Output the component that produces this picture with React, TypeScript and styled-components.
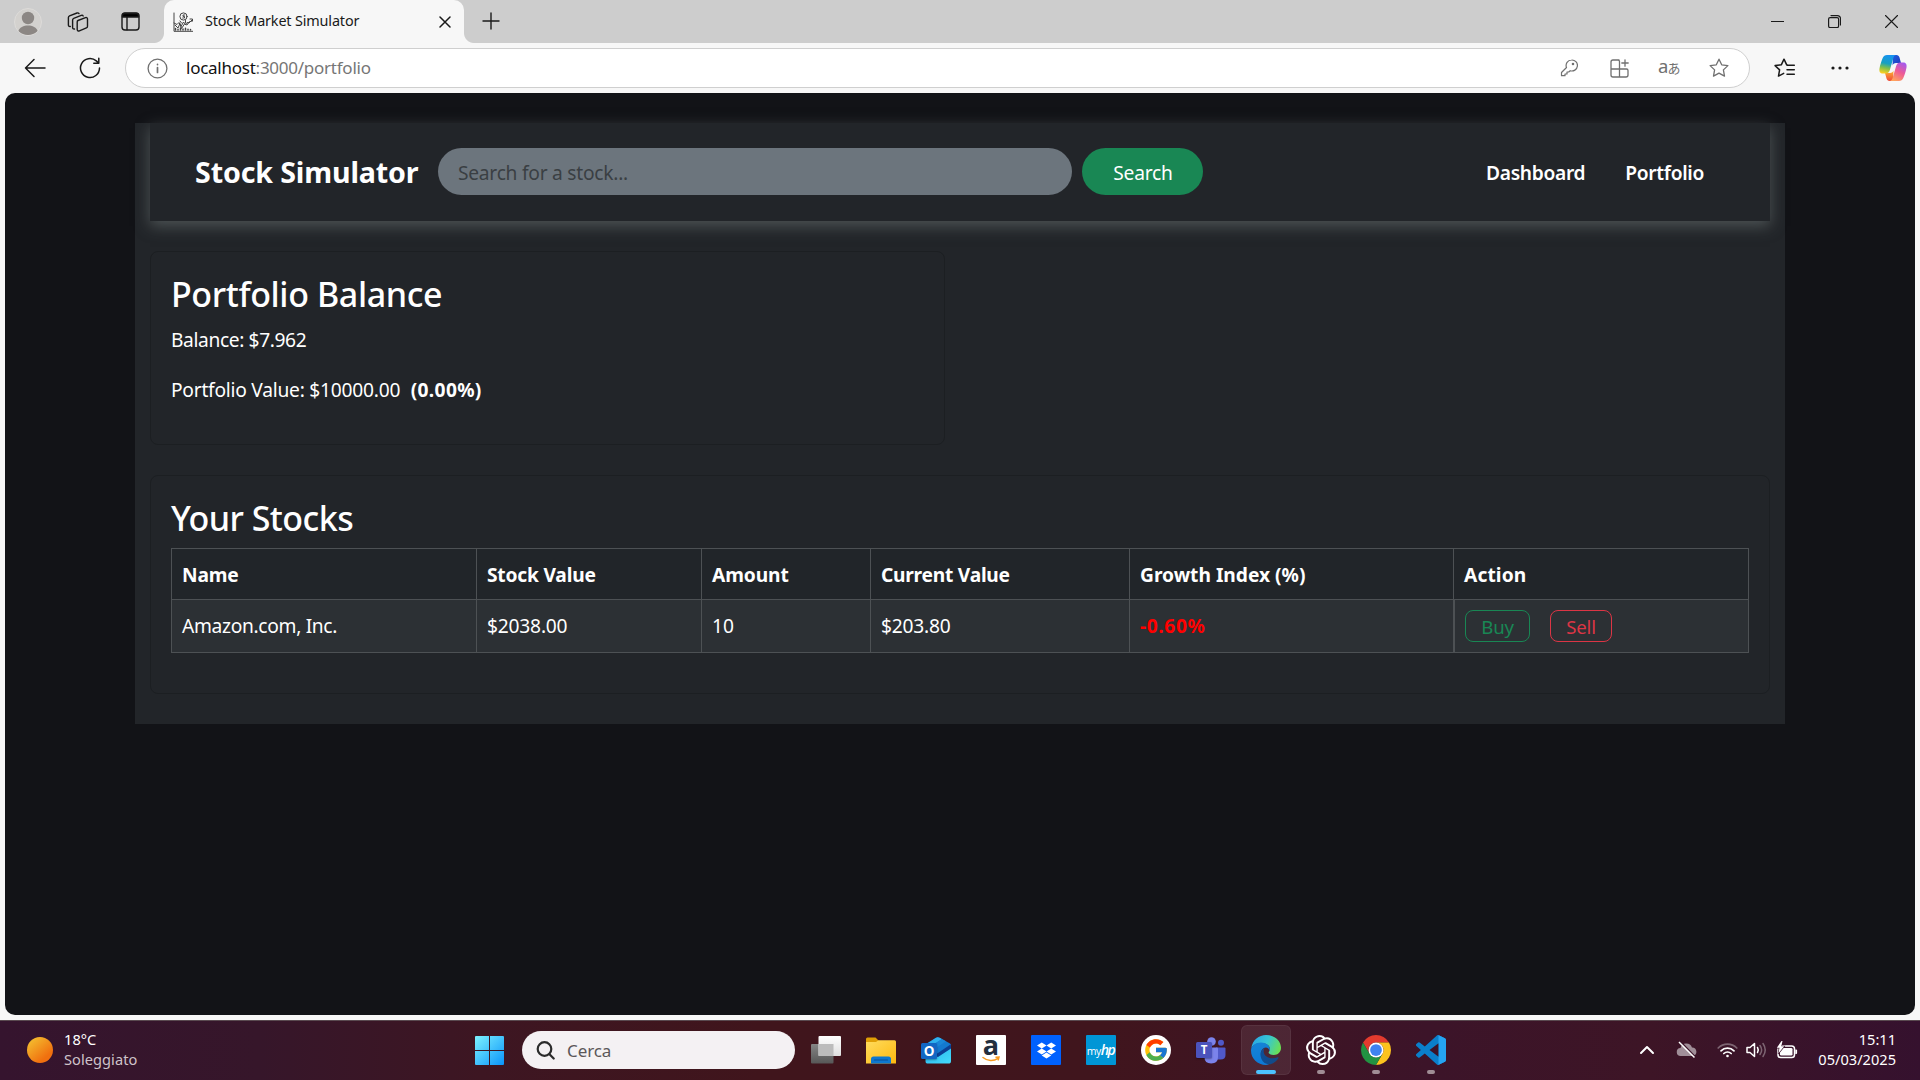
import React from "react";
import styled, { createGlobalStyle } from "styled-components";
import { FcGoogle } from "react-icons/fc";
import { FaDropbox } from "react-icons/fa";
import { SiOpenai } from "react-icons/si";

const font = `"Noto Sans", "Open Sans", sans-serif`;

const GlobalStyle = createGlobalStyle`
  *, *::before, *::after { box-sizing: border-box; }
  body { margin: 0; background: #f7f7f7; font-family: ${font}; overflow: hidden; }
  button, input { font-family: inherit; }
  svg { display: block; flex: none; }
`;

const Screen = styled.div`
  width: 1920px;
  height: 1080px;
  display: flex;
  flex-direction: column;
`;

/* ---------- browser chrome ---------- */

const TabStrip = styled.header`
  height: 43px;
  flex: none;
  display: flex;
  align-items: center;
  background: #cdcdcd;
  padding-left: 14px;
`;

const StripIcon = styled.span<{ $gap?: number; $up?: number }>`
  display: flex;
  margin-left: ${(p) => p.$gap ?? 0}px;
  margin-bottom: ${(p) => p.$up ?? 0}px;
`;

const Tab = styled.div`
  position: relative;
  align-self: stretch;
  width: 300px;
  margin-left: 24px;
  padding: 0 13.5px 0 9px;
  display: flex;
  align-items: center;
  background: #f7f7f7;
  border-radius: 10px 10px 0 0;

  &::before,
  &::after {
    content: "";
    position: absolute;
    bottom: 0;
    width: 10px;
    height: 10px;
  }
  &::before {
    left: -10px;
    background: radial-gradient(circle at 0 0, transparent 9.5px, #f7f7f7 10.5px);
  }
  &::after {
    right: -10px;
    background: radial-gradient(circle at 100% 0, transparent 9.5px, #f7f7f7 10.5px);
  }
`;

const TabTitle = styled.span`
  flex: 1;
  margin: 0 0 3px 12px;
  font-size: 14.4px;
  letter-spacing: -0.15px;
  color: #1a1a1a;
`;

const WindowButtons = styled.div`
  margin-left: auto;
  display: flex;
  align-items: center;
  gap: 44px;
  padding-right: 22px;
`;

const Toolbar = styled.div`
  height: 50px;
  flex: none;
  display: flex;
  align-items: center;
  padding-left: 24px;
  background: #f7f7f7;
`;

const AddressBar = styled.div`
  width: 1625px;
  height: 40px;
  margin-left: 24px;
  padding: 0 5px 0 21px;
  display: flex;
  align-items: center;
  background: #fff;
  border: 1px solid #cfcfcf;
  border-radius: 20px;
`;

const Url = styled.span`
  flex: 1;
  margin-left: 18px;
  padding-bottom: 1px;
  font-size: 17px;
  letter-spacing: -0.25px;
  color: #767676;

  b {
    font-weight: 400;
    color: #111;
  }
`;

const AddressIcons = styled.div`
  display: grid;
  grid-template-columns: repeat(4, 50px);
  align-items: center;
  justify-items: center;
`;

const Translate = styled.span`
  width: 22px;
  display: flex;
  align-items: baseline;
  color: #707070;
  font: 18.5px/20px "Noto Sans", sans-serif;
  padding-bottom: 2px;

  small {
    font: 13px/20px "Noto Sans CJK JP", sans-serif;
    margin-left: -1px;
  }
`;

const ToolbarIcons = styled.div`
  display: flex;
  align-items: center;
  margin-left: 24px;
`;

/* ---------- page ---------- */

const Viewport = styled.main`
  height: 922px;
  flex: none;
  margin: 0 5px;
  padding-top: 30px;
  background: #121317;
  border-radius: 10px;
  color: #fff;
  font-size: 19.2px;
`;

const Container = styled.div`
  width: 1650px;
  height: 601px;
  margin: 0 auto;
  padding: 0 15px;
  background: #222529;
`;

const Nav = styled.nav`
  height: 98px;
  padding: 0 66px 2px 45px;
  display: flex;
  align-items: center;
  background: #222529;
  box-shadow: 0 5px 14px rgba(108, 117, 117, 0.58);
`;

const Brand = styled.span`
  width: 243px;
  font-size: 28.6px;
  font-weight: 700;
  letter-spacing: -0.13px;
`;

const SearchInput = styled.input`
  width: 634px;
  height: 47px;
  padding: 2px 20px 0;
  border: 0;
  border-radius: 24px;
  background: #6c757d;
  color: #fff;
  font-size: 19.2px;
  letter-spacing: -0.25px;

  &::placeholder {
    color: #3a3f43;
    opacity: 1;
  }
`;

const SearchButton = styled.button`
  width: 121px;
  height: 47px;
  margin-left: 10px;
  padding: 2px 0 0 1px;
  border: 0;
  border-radius: 24px;
  background: #198754;
  color: #fff;
  font-size: 19.2px;
  letter-spacing: -0.2px;
`;

const NavLinks = styled.div`
  margin-left: auto;
  display: flex;
  gap: 40px;
  padding-top: 3px;
  font-weight: 600;
  letter-spacing: -0.3px;
`;

const Card = styled.section<{ $w: number; $h: number }>`
  width: ${(p) => p.$w}px;
  height: ${(p) => p.$h}px;
  margin-top: 30px;
  padding: 21px 20px 20px;
  border: 1px solid #1c1f22;
  border-radius: 8px;
`;

const Heading = styled.h3<{ $ls: number; $mb: number }>`
  margin: 0 0 ${(p) => p.$mb}px;
  font-size: 34px;
  font-weight: 500;
  line-height: 43px;
  letter-spacing: ${(p) => p.$ls}px;
`;

const Line = styled.p<{ $ls: number }>`
  margin: 0 0 20px;
  line-height: 30px;
  letter-spacing: ${(p) => p.$ls}px;

  strong {
    margin-left: 10.5px;
    letter-spacing: 0.35px;
  }
`;

const Table = styled.div`
  display: grid;
  grid-template-columns: 305px 225px 169px 259px 324px 296px;
  grid-template-rows: 51px 53px;
  border-bottom: 1px solid #4d5154;
`;

const Cell = styled.div<{ $head?: boolean; $ls?: number; $thick?: boolean; $color?: string }>`
  display: flex;
  align-items: center;
  padding: 0 0 ${(p) => (p.$head ? 0 : 1)}px 10px;
  border-left: ${(p) => (p.$thick ? 2 : 1)}px solid #4d5154;
  border-top: 1px solid #4d5154;
  background: ${(p) => (p.$head ? "#212529" : "#2c3034")};
  font-weight: ${(p) => (p.$head || p.$color ? 700 : 400)};
  color: ${(p) => p.$color ?? "#fff"};
  letter-spacing: ${(p) => p.$ls ?? 0}px;

  &:nth-child(6n) {
    border-right: 1px solid #4d5154;
  }
`;

const OutlineButton = styled.button<{ $color: string; $w: number }>`
  width: ${(p) => p.$w}px;
  height: 32px;
  margin-right: 20px;
  padding: 2px 0 0;
  border: 1px solid ${(p) => p.$color};
  border-radius: 8px;
  background: transparent;
  color: ${(p) => p.$color};
  font-size: 18.6px;
  line-height: 28px;
  letter-spacing: -0.2px;
`;

/* ---------- taskbar ---------- */

const Taskbar = styled.footer`
  height: 60px;
  flex: none;
  margin-top: 5px;
  padding-bottom: 1px;
  display: flex;
  align-items: center;
  border-top: 1px solid #5a4a50;
  background: linear-gradient(90deg, #35142e 0, #36162a 260px, #3d1622 480px, #40151c 760px, #40151d 1100px, #3c1429 1430px, #3d1526 1650px, #35112e 1920px);
  color: #fff;
`;

const Weather = styled.div`
  width: 448px;
  padding-left: 27px;
  display: flex;
  align-items: center;
  gap: 11px;
  font-size: 14.6px;
  line-height: 20px;
  letter-spacing: 0.05px;

  div {
    padding-bottom: 3px;
  }
  small {
    display: block;
    font-size: inherit;
    color: #cfc3ca;
  }
`;

const Sun = styled.span`
  width: 26px;
  height: 26px;
  margin-bottom: 1px;
  border-radius: 50%;
  background: linear-gradient(140deg, #f4bd2f 10%, #f0700f 75%);
`;

const Slot = styled.div<{ $active?: boolean }>`
  position: relative;
  width: 50px;
  height: 50px;
  margin-right: 5px;
  display: flex;
  align-items: center;
  justify-content: center;
  border-radius: 6px;
  ${(p) => p.$active && "background: rgba(255,255,255,0.08); box-shadow: inset 0 0 0 1px rgba(255,255,255,0.06);"}
`;

const Running = styled.span<{ $active?: boolean }>`
  position: absolute;
  left: 50%;
  bottom: 1px;
  width: ${(p) => (p.$active ? 20 : 8)}px;
  height: 4px;
  transform: translateX(-50%);
  border-radius: 2px;
  background: ${(p) => (p.$active ? "#4cc2ff" : "#a08d95")};
`;

const TaskSearch = styled.div`
  width: 273px;
  height: 38px;
  margin: 0 6px 0 3px;
  padding-left: 14px;
  display: flex;
  align-items: center;
  gap: 12px;
  border-radius: 19px;
  background: #f4f1f3;
  color: #5b5759;
  font-size: 17px;
  letter-spacing: -0.1px;
`;

const AppTile = styled.span<{ $bg: string; $round?: boolean }>`
  width: 30px;
  height: 30px;
  display: flex;
  align-items: center;
  justify-content: center;
  border-radius: ${(p) => (p.$round ? "50%" : "1px")};
  background: ${(p) => p.$bg};
`;

const AmazonMark = styled.span`
  display: flex;
  flex-direction: column;
  align-items: center;
  color: #232f3e;
  font: 700 27px/18px "Open Sans", sans-serif;
  padding-bottom: 2px;

  svg {
    margin-top: 2px;
  }
`;

const MyHp = styled.span`
  display: flex;
  align-items: baseline;
  color: #fff;
  font: 10.5px/14px "Open Sans", sans-serif;
  letter-spacing: -0.5px;

  i {
    font: italic 600 14px/14px "Open Sans", sans-serif;
    letter-spacing: -1.5px;
    padding-right: 1px;
  }
`;

const Tray = styled.div`
  margin-left: auto;
  display: flex;
  align-items: center;
  padding-right: 24px;
`;

const TrayIcon = styled.span<{ $r: number }>`
  display: flex;
  margin-right: ${(p) => p.$r}px;
`;

const Clock = styled.div`
  text-align: right;
  font-size: 14.6px;
  line-height: 20px;
  letter-spacing: 0;
  padding-bottom: 3px;
`;

/* ---------- icons ---------- */

const Stroke = ({ w, h, sw = 1.3, c = "#1a1a1a", children }: { w: number; h: number; sw?: number; c?: string; children: React.ReactNode }) => (
  <svg width={w} height={h} viewBox={`0 0 ${w} ${h}`} fill="none" stroke={c} strokeWidth={sw} strokeLinecap="round" strokeLinejoin="round">
    {children}
  </svg>
);

const Avatar = () => (
  <svg width="28" height="28" viewBox="0 0 28 28">
    <clipPath id="av"><circle cx="14" cy="14" r="13" /></clipPath>
    <circle cx="14" cy="14" r="13.5" fill="#d3d1ce" stroke="#dddbd9" />
    <g fill="#8c8784" clipPath="url(#av)">
      <circle cx="14" cy="10" r="6.2" />
      <path d="M4 24c1-5 6-6.500 10-6.500s9 1.500 10 6.500c-2 2.500-6 4-10 4s-8-1.500-10-4z" />
    </g>
  </svg>
);

const Workspaces = () => (
  <Stroke w={22} h={22} sw={1.4}>
    <path d="M11 9.500l7.500-2.800c1.200-.4 2 .1 2 1.200v7.300c0 .8-.4 1.400-1.100 1.700l-7 2.900c-1.200.5-2.200 0-2.200-1.200v-7.500c0-.8.2-1.300.8-1.600z" />
    <path d="M7.500 18c-1.200.2-1.900-.4-1.900-1.500V9c0-.8.300-1.400 1.100-1.700l7.500-2.900c.9-.3 1.600-.1 2 .6" />
    <path d="M3.300 15.500c-1.200.2-1.900-.4-1.900-1.500V6.600c0-.8.300-1.400 1.100-1.700l7.500-2.900c.9-.3 1.600-.1 2 .6" />
  </Stroke>
);

const TabActions = () => (
  <Stroke w={19} h={19} sw={1.4}>
    <rect x="1" y="1" width="17" height="17" rx="3" />
    <path d="M1.500 5V3.500a2 2 0 0 1 2-2h12a2 2 0 0 1 2 2V5z" fill="#000" />
    <path d="M6 5.500v12.300" />
  </Stroke>
);

const Favicon = () => (
  <Stroke w={20} h={20} sw={1} c="#444">
    <path d="M1 1v18.300h19" />
    <circle cx="10.500" cy="4.500" r="3.600" />
    <path d="M11.500 3h-1.500v1.400h1.500v1.600H9.700M1 11l3 1.500 2-2 2 4 2.500-4.500 2 2.500 1.500-2 2 .5 3.500-3.500M2 13l3 3 2-4.500 1.500 5 3-4.500 2.500 1 2-3 3-1M17 7h2.500v2M7 9l1.500 2M12.500 8.500v2" />
    <path d="M2.500 18v-1.500M5 18v-.8M7.500 18v-2M10 18v-1M12.500 18v-1.800M15 18v-.8M17.500 18v-.4" strokeWidth="1.500" />
  </Stroke>
);

const starPath = "M10 1.200l2.700 5.600 6.200.8-4.500 4.300 1.100 6.200L10 15.100l-5.500 3 1.100-6.200L1.100 7.600l6.200-.8z";

const Copilot = () => (
  <svg width="28" height="26" viewBox="0 0 28 26">
    <defs>
      <linearGradient id="c1" x1="0.500" y1="0" x2="0.300" y2="1">
        <stop offset="0" stopColor="#1792f0" /><stop offset=".45" stopColor="#16a0c0" /><stop offset=".7" stopColor="#7fc04a" /><stop offset="1" stopColor="#ffd020" />
      </linearGradient>
      <linearGradient id="c2" x1="0.800" y1="0" x2="0.300" y2="1">
        <stop offset="0" stopColor="#a259f0" /><stop offset=".5" stopColor="#ee5a96" /><stop offset="1" stopColor="#ffa45c" />
      </linearGradient>
      <linearGradient id="c3" x1="0" y1="0" x2="1" y2="1">
        <stop offset="0" stopColor="#1c5fe0" /><stop offset="1" stopColor="#2238b8" />
      </linearGradient>
      <linearGradient id="c4" x1="0" y1="0" x2="0" y2="1">
        <stop offset="0" stopColor="#ffb52e" /><stop offset="1" stopColor="#ee4a3a" />
      </linearGradient>
    </defs>
    <path d="M14 0h3.500c1.600 0 2.500 1 3 2.500l1.500 5.500h-5c-2 0-3 1-3.500 2.500z" fill="url(#c3)" />
    <path d="M14 26h-3.500c-1.600 0-2.500-1-3-2.500L6 18h5c2 0 3-1 3.500-2.500z" fill="url(#c4)" />
    <path d="M8 0h9c-1.500.3-2.200 1.500-2.800 3.400L11 14.500C10.300 17 9 18.500 6.500 18.500H4C1 18.500 0 16.500.5 13.500 1.200 9.500 2.500 6 3.700 3 4.500 1 6 0 8 0z" fill="url(#c1)" />
    <path d="M20 26h-9c1.500-.3 2.200-1.500 2.800-3.400L17 11.500C17.700 9 19 7.500 21.500 7.500H24c3 0 4 2 3.500 5-.7 4-2 7.500-3.200 10.500-.8 2-2.300 3-4.300 3z" fill="url(#c2)" />
  </svg>
);

const WindowsLogo = () => (
  <svg width="29" height="29" viewBox="0 0 29 29">
    <linearGradient id="win" x1="0" y1="0" x2="1" y2="1"><stop offset="0" stopColor="#7df2ff" /><stop offset="1" stopColor="#0a94fa" /></linearGradient>
    <path d="M0 1q0-1 1-1h13v14H0zM15 0h13q1 0 1 1v13H15zM0 15h14v14H1q-1 0-1-1zM15 15h14v13q0 1-1 1H15z" fill="url(#win)" />
  </svg>
);

const TaskView = () => (
  <svg width="30" height="28" viewBox="0 0 30 28">
    <defs>
      <linearGradient id="tv1" x1="0" y1="0" x2="0" y2="1"><stop offset="0" stopColor="#858585" /><stop offset="1" stopColor="#575757" /></linearGradient>
      <linearGradient id="tv2" x1="0" y1="0" x2="0" y2="1"><stop offset="0" stopColor="#fff" /><stop offset="1" stopColor="#dedede" /></linearGradient>
    </defs>
    <rect x="0" y="8" width="22.500" height="19.500" rx="1" fill="url(#tv1)" />
    <rect x="7.500" y="0" width="22.500" height="20" rx="1" fill="url(#tv2)" />
    <rect x="7.500" y="8" width="15" height="12" fill="#bcbcbc" />
  </svg>
);

const Explorer = () => (
  <svg width="30" height="27" viewBox="0 0 30 27">
    <linearGradient id="ex" x1="0" y1="0" x2="1" y2="1"><stop offset="0" stopColor="#ffdc5e" /><stop offset="1" stopColor="#fdb90f" /></linearGradient>
    <path d="M0 2Q0 .5 1.500.5h8l3 3V6H0z" fill="#e09f05" />
    <path d="M0 5h10l2.500-1.800H28.500Q30 3.200 30 4.700V26.500H0z" fill="url(#ex)" />
    <path d="M5 26.500v-4.500q0-2.500 2.500-2.500h15q2.500 0 2.500 2.500v4.500z" fill="#0d78d0" />
    <path d="M8.500 23h13" stroke="#0a4f96" strokeWidth="1.200" strokeLinecap="round" />
  </svg>
);

const LetterTile = styled.span<{ $bg: string; $top: number; $size: number }>`
  position: absolute;
  left: 0;
  top: ${(p) => p.$top}px;
  width: 16px;
  height: 16px;
  display: flex;
  align-items: center;
  justify-content: center;
  border-radius: 1.5px;
  background: ${(p) => p.$bg};
  box-shadow: 0 1px 2px rgba(0, 0, 0, 0.35);
  color: #fff;
  font: 700 ${(p) => p.$size}px/16px "Open Sans", sans-serif;
`;

const IconBox = styled.span`
  position: relative;
  display: flex;
`;

const Outlook = () => (
  <IconBox>
    <svg width="30" height="27" viewBox="0 0 30 27">
      <linearGradient id="ol" x1="0" y1="0" x2="1" y2="1"><stop offset="0" stopColor="#28b4ec" /><stop offset="1" stopColor="#45dcfb" /></linearGradient>
      <path d="M4 7.500L15 .8q1.800-1 3.600 0L29 6.500q1 .7 1 2V13L12 22 4 16z" fill="#1479d0" />
      <path d="M4 8L15 .8q1.800-1 3.600 0L21 2 6 12z" fill="#2eb2ee" />
      <path d="M21 2l4 2.300L9 15V9.500z" fill="#1a86d8" />
      <path d="M29.500 7.500L14 18v4l16-9V8.500z" fill="#0c3f94" />
      <path d="M30 11.500V24q0 2.600-2.600 2.600H7Q4.500 26.600 4.500 24V16L17 20z" fill="url(#ol)" />
    </svg>
    <LetterTile $bg="#1267c4" $top={6} $size={13.5}>O</LetterTile>
  </IconBox>
);

const Teams = () => (
  <IconBox>
    <svg width="30" height="27" viewBox="0 0 30 27">
      <circle cx="15.500" cy="4.500" r="4.300" fill="#7b83eb" />
      <circle cx="25" cy="5.800" r="3" fill="#5059c9" />
      <path d="M20 10.500h8.500q1 0 1 1V18q0 4.500-5 4.500H20z" fill="#5059c9" />
      <path d="M9 10.500h12q1 0 1 1V20q0 6.500-6.800 6.500T8.500 20z" fill="#7b83eb" />
    </svg>
    <LetterTile $bg="#4b53bc" $top={5} $size={11.5}>T</LetterTile>
  </IconBox>
);

const Edge = () => (
  <svg width="30" height="30" viewBox="0 0 30 30">
    <defs>
      <linearGradient id="e1" x1="0" y1=".3" x2="1" y2=".6"><stop offset="0" stopColor="#2aa5e4" /><stop offset=".5" stopColor="#36c6d4" /><stop offset="1" stopColor="#6be052" /></linearGradient>
      <linearGradient id="e2" x1=".3" y1="0" x2=".5" y2="1"><stop offset="0" stopColor="#1583d6" /><stop offset="1" stopColor="#0d7ad6" /></linearGradient>
      <linearGradient id="e3" x1="0" y1="0" x2="1" y2=".6"><stop offset="0" stopColor="#0b4f9c" /><stop offset="1" stopColor="#134a86" /></linearGradient>
    </defs>
    <path d="M.3 13C1.500 5 8 0 15 0c9 0 15 6 15 12.800 0 4.700-3.300 7.200-7.200 7.200-3.300 0-5.200-1.200-5.200-2.400 0-.9 1.300-1.300 1.300-3.600C18.900 10.500 15 8 10.500 8 6 8 2 10 .3 13z" fill="url(#e1)" />
    <path d="M0 15.500C0 11 4.500 7.500 10 7.500c5 0 8.900 3 8.900 6.800 0 1-.3 1.700-.6 2.200.2-2.500-1.600-4-3.500-4-3 0-5 3-5 6.500 0 5 4 9 9.200 9.300C18 29.200 16.500 30 15 30 6.500 30 0 23.500 0 15.500z" fill="url(#e2)" />
    <path d="M14 12.500C11 14 9.500 17 9.500 19.500 9.500 25.500 14 30 19.500 29.200c3.500-1 6.500-3.500 8-6.200.3-.6-.2-1-.8-.7-5.500 2.500-13.200.5-14-5-.2-2 .3-3.500 1.300-4.800z" fill="url(#e3)" />
  </svg>
);

const Chrome = () => (
  <svg width="30" height="30" viewBox="0 0 48 48">
    <path d="M24 12h20.780A24 24 0 0 0 3.220 12L13.600 30A12 12 0 0 1 24 12z" fill="#e33b2e" />
    <path d="M24 12h20.780A24 24 0 0 1 24 48l10.390-18A12 12 0 0 0 24 12z" fill="#fcc31e" />
    <path d="M3.220 12A24 24 0 0 0 24 48l10.390-18a12 12 0 0 1-20.780 0z" fill="#229342" />
    <circle cx="24" cy="24" r="12" fill="#fff" />
    <circle cx="24" cy="24" r="9.400" fill="#3f82f0" />
  </svg>
);

const vscodePath =
  "M23.150 2.587L18.210.21a1.494 1.494 0 0 0-1.705.29l-9.460 8.630-4.120-3.128a.999.999 0 0 0-1.276.057L.327 7.261A1 1 0 0 0 .326 8.740L3.899 12 .326 15.260a1 1 0 0 0 .001 1.479L1.650 17.940a.999.999 0 0 0 1.276.057l4.120-3.128 9.460 8.630a1.492 1.492 0 0 0 1.704.29l4.942-2.377A1.500 1.500 0 0 0 24 20.060V3.939a1.500 1.500 0 0 0-.850-1.352zm-5.146 14.861L10.826 12l7.178-5.448v10.896z";

const VsCode = () => (
  <svg width="30" height="30" viewBox="0 0 24 24">
    <clipPath id="vs"><path d="M18 0h6v24h-6z" /></clipPath>
    <path d={vscodePath} fill="#0a7fcb" />
    <path d={vscodePath} fill="#25a4f1" clipPath="url(#vs)" />
  </svg>
);

/* ---------- data ---------- */

const headers: [string, number][] = [
  ["Name", -0.15],
  ["Stock Value", -0.2],
  ["Amount", -0.1],
  ["Current Value", -0.25],
  ["Growth Index (%)", 0],
  ["Action", 0.1],
];

const apps: { icon: React.ReactNode; running?: boolean; active?: boolean }[] = [
  { icon: <TaskView /> },
  { icon: <Explorer /> },
  { icon: <Outlook /> },
  {
    icon: (
      <AppTile $bg="#fff">
        <AmazonMark>
          a
          <svg width="18" height="6" viewBox="0 0 18 6" fill="none" stroke="#f79a1f" strokeWidth="1.500" strokeLinecap="round">
            <path d="M1 1.500c4.500 3.800 10.500 4 15 .8M14 1.200l3-.2-.7 2.800" />
          </svg>
        </AmazonMark>
      </AppTile>
    ),
  },
  { icon: <AppTile $bg="#0061fe"><FaDropbox size={19} color="#fff" /></AppTile> },
  { icon: <AppTile $bg="#0096d6"><MyHp>my<i>hp</i></MyHp></AppTile> },
  { icon: <AppTile $bg="#fff" $round><FcGoogle size={26} /></AppTile> },
  { icon: <Teams /> },
  { icon: <Edge />, running: true, active: true },
  { icon: <SiOpenai size={30} color="#fff" />, running: true },
  { icon: <Chrome />, running: true },
  { icon: <VsCode />, running: true },
];

export default function App() {
  return (
    <Screen>
      <GlobalStyle />
      <TabStrip>
        <StripIcon><Avatar /></StripIcon>
        <StripIcon $gap={25}><Workspaces /></StripIcon>
        <StripIcon $gap={32}><TabActions /></StripIcon>
        <Tab>
          <Favicon />
          <TabTitle>Stock Market Simulator</TabTitle>
          <Stroke w={12} h={12} sw={1.5}><path d="M1 1l10 10M11 1L1 11" /></Stroke>
        </Tab>
        <StripIcon $gap={18} $up={2}><Stroke w={18} h={18} sw={1.4}><path d="M9 1v16M1 9h16" /></Stroke></StripIcon>
        <WindowButtons>
          <Stroke w={13} h={13} sw={1}><path d="M0 6.500h13" /></Stroke>
          <Stroke w={13} h={13} sw={1.2}>
            <rect x=".6" y="2.600" width="10" height="10" rx="1.500" />
            <path d="M3 .6h6.500a3 3 0 0 1 3 3V10" />
          </Stroke>
          <Stroke w={13} h={13} sw={1.1}><path d="M.5.5l12 12M12.500.5l-12 12" /></Stroke>
        </WindowButtons>
      </TabStrip>

      <Toolbar>
        <Stroke w={22} h={20} sw={1.5}><path d="M21 10H1.500M10 1.500L1.500 10l8.500 8.500" /></Stroke>
        <StripIcon $gap={33}>
          <Stroke w={22} h={22} sw={1.5}><path d="M20.500 11a9.500 9.500 0 1 1-3.200-7.100l2.200 2M19.800 1.200v5h-5" /></Stroke>
        </StripIcon>
        <AddressBar>
          <Stroke w={21} h={21} sw={1.3} c="#707070">
            <circle cx="10.500" cy="10.500" r="9.400" />
            <path d="M10.500 9.500v5M10.500 6.400v.2" strokeWidth="1.700" />
          </Stroke>
          <Url><b>localhost</b>:3000/portfolio</Url>
          <AddressIcons>
            <Stroke w={18} h={18} sw={1.2} c="#707070">
              <path d="M11.500 1a5.500 5.500 0 1 1-1.300 10.700L8.700 13H7v2H5v1.700H1.500v-3.200l5-5A5.500 5.500 0 0 1 11.500 1z" />
              <circle cx="13" cy="5" r=".7" fill="#707070" />
            </Stroke>
            <Stroke w={19} h={19} sw={1.3} c="#707070">
              <path d="M9 1H3a2 2 0 0 0-2 2v13a2 2 0 0 0 2 2h13a2 2 0 0 0 2-2v-4.500a1.500 1.500 0 0 0-1.500-1.500H1M9.500 18V2.500A1.500 1.500 0 0 0 8 1M15 .8v6.400M11.800 4h6.400" />
            </Stroke>
            <Translate>a<small>あ</small></Translate>
            <Stroke w={20} h={20} sw={1.3} c="#707070"><path d={starPath} /></Stroke>
          </AddressIcons>
        </AddressBar>
        <ToolbarIcons>
          <Stroke w={22} h={20} sw={1.5}>
            <path d="M13.500 7.300l-.800-.5L10 1.200 7.300 6.800l-6.200.8 4.500 4.300-1.100 6.200 5.200-2.800M13.500 7.300h6.800M13 11.800h7.300M13 16.300h7.300" />
          </Stroke>
          <StripIcon $gap={35}>
            <svg width="18" height="4" viewBox="0 0 18 4" fill="#1a1a1a">
              <circle cx="2" cy="2" r="1.600" /><circle cx="9" cy="2" r="1.600" /><circle cx="16" cy="2" r="1.600" />
            </svg>
          </StripIcon>
          <StripIcon $gap={30}><Copilot /></StripIcon>
        </ToolbarIcons>
      </Toolbar>

      <Viewport>
        <Container>
          <Nav>
            <Brand>Stock Simulator</Brand>
            <SearchInput placeholder="Search for a stock..." />
            <SearchButton>Search</SearchButton>
            <NavLinks><span>Dashboard</span><span>Portfolio</span></NavLinks>
          </Nav>

          <Card $w={795} $h={194}>
            <Heading $ls={-0.38} $mb={9}>Portfolio Balance</Heading>
            <Line $ls={-0.38}>Balance: $7.962</Line>
            <Line $ls={-0.24}>Portfolio Value: $10000.00<strong>(0.00%)</strong></Line>
          </Card>

          <Card $w={1620} $h={219}>
            <Heading $ls={-0.55} $mb={8}>Your Stocks</Heading>
            <Table>
              {headers.map(([label, ls]) => (
                <Cell key={label} $head $ls={ls}>{label}</Cell>
              ))}
              <Cell $ls={-0.32}>Amazon.com, Inc.</Cell>
              <Cell $ls={-0.2}>$2038.00</Cell>
              <Cell>10</Cell>
              <Cell $ls={-0.2}>$203.80</Cell>
              <Cell $color="#ff0000" $ls={0.6}>-0.60%</Cell>
              <Cell $thick>
                <OutlineButton $color="#198754" $w={65}>Buy</OutlineButton>
                <OutlineButton $color="#dc3545" $w={62}>Sell</OutlineButton>
              </Cell>
            </Table>
          </Card>
        </Container>
      </Viewport>

      <Taskbar>
        <Weather>
          <Sun />
          <div>18°C<small>Soleggiato</small></div>
        </Weather>
        <StripIcon $gap={27}><WindowsLogo /></StripIcon>
        <StripIcon $gap={15}>
          <TaskSearch>
            <Stroke w={19} h={19} sw={2.2} c="#2b2b2b"><circle cx="8.500" cy="8" r="6.800" /><path d="M13.500 13.200l4.200 4.300" /></Stroke>
            Cerca
          </TaskSearch>
        </StripIcon>
        {apps.map((app, i) => (
          <Slot key={i} $active={app.active}>
            {app.icon}
            {app.running && <Running $active={app.active} />}
          </Slot>
        ))}
        <Tray>
          <TrayIcon $r={21}><Stroke w={16} h={10} sw={2} c="#fff"><path d="M2 8l6-6 6 6" /></Stroke></TrayIcon>
          <TrayIcon $r={19}>
            <svg width="22" height="18" viewBox="0 0 22 18">
              <path d="M5 15a4 4 0 0 1-.5-8A6 6 0 0 1 16 6.500a4.300 4.300 0 0 1 1 8.500z" fill="#a08e98" />
              <path d="M4.200 .3l15 15.500" stroke="#3b1329" strokeWidth="1.500" />
              <path d="M3 1l15.500 15.500" stroke="#fff" strokeWidth="1.500" />
            </svg>
          </TrayIcon>
          <TrayIcon $r={8}>
            <svg width="21" height="16" viewBox="0 0 21 16" fill="none" strokeWidth="1.700" strokeLinecap="round">
              <path d="M1.200 6a13 13 0 0 1 18.600 0" stroke="#7d6572" />
              <path d="M4 8.800a9.200 9.200 0 0 1 13 0M6.800 11.500a5.400 5.400 0 0 1 7.400 0" stroke="#fff" />
              <circle cx="10.500" cy="14" r="1.300" fill="#fff" />
            </svg>
          </TrayIcon>
          <TrayIcon $r={9}>
            <svg width="21" height="16" viewBox="0 0 21 16" fill="none" strokeWidth="1.500" strokeLinecap="round" strokeLinejoin="round">
              <path d="M1 5.500h3L8.500 1.500v13L4 10.500H1zM11.500 5.500q1.500 2.500 0 5" stroke="#fff" />
              <path d="M14 3.500q3.300 4.500 0 9M17 1.500q4.500 6.500 0 13" stroke="#7d6572" />
            </svg>
          </TrayIcon>
          <TrayIcon $r={20}>
            <svg width="22" height="18" viewBox="0 0 22 18">
              <rect x="2" y="5" width="16.500" height="11.500" rx="2.800" fill="none" stroke="#fff" strokeWidth="1.500" />
              <rect x="4" y="7" width="12.500" height="7.500" rx="1.300" fill="#fff" />
              <path d="M19.300 8.500h.8q1 0 1 1V12q0 1-1 1h-.8z" fill="#fff" />
              <path d="M5.500 0L.8 6.800h2.700L2.300 12.500 8.200 5.300H5.300L6.500 0z" fill="#fff" stroke="#3a1229" strokeWidth="1.200" paintOrder="stroke" />
            </svg>
          </TrayIcon>
          <Clock>15:11<br />05/03/2025</Clock>
        </Tray>
      </Taskbar>
    </Screen>
  );
}
